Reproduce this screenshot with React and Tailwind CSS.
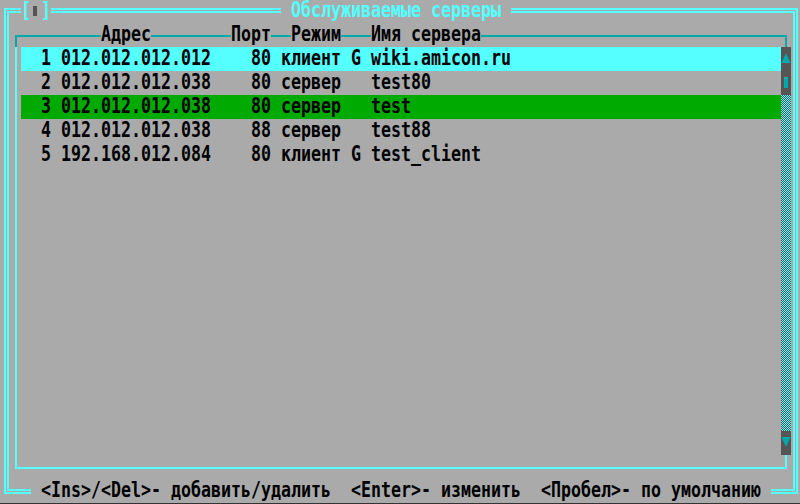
import React from "react";

const BASE =
  "block whitespace-pre origin-left scale-x-[0.755] font-['DejaVu_Sans_Mono',monospace] font-bold text-[22px] ";
const TXT = BASE + "leading-[22px]";
const TXT0 = BASE + "leading-[20px]";

function T({ w, children, className = "" }) {
  return (
    <div className={"shrink-0 h-[24px] " + w + " " + className}>
      <span className={TXT}>{children}</span>
    </div>
  );
}

function T0({ w, children, className = "" }) {
  return (
    <div className={"shrink-0 h-[23px] " + w + " " + className}>
      <span className={TXT0}>{children}</span>
    </div>
  );
}

function DH({ w }) {
  // double horizontal line segment (outer frame)
  return <div className={"shrink-0 h-[5px] border-y-2 border-[#55ffff] " + w} />;
}

const rows = [
  { bg: "bg-[#55ffff]", t: "  1 012.012.012.012    80 клиент G wiki.amicon.ru" },
  { bg: "", t: "  2 012.012.012.038    80 сервер   test80" },
  { bg: "bg-[#00aa00]", t: "  3 012.012.012.038    80 сервер   test" },
  { bg: "", t: "  4 012.012.012.038    88 сервер   test88" },
  { bg: "", t: "  5 192.168.012.084    80 клиент G test_client" },
];

export default function App() {
  return (
    <div className="w-[800px] h-[504px] bg-[#aaaaaa] flex flex-col pl-px overflow-hidden text-black">
      {/* Row 0: top frame with close box and title */}
      <div className="flex h-[23px] shrink-0">
        <div className="w-[10px] shrink-0 flex flex-col pl-[3px] pt-[8px]">
          <div className="flex-1 border-l-2 border-t-2 border-[#55ffff] flex flex-col pl-px pt-px">
            <div className="flex-1 border-l-2 border-t-2 border-[#55ffff]" />
          </div>
        </div>
        <div className="w-[10px] shrink-0 pt-[8px]">
          <DH w="w-[10px]" />
        </div>
        <T0 w="w-[10px]" className="text-[#55ffff]">[</T0>
        <div className="w-[10px] shrink-0 pl-[2px] pt-[6px]">
          <div className="w-[4px] h-[10px] bg-[#555555]" />
        </div>
        <T0 w="w-[10px]" className="text-[#55ffff]">]</T0>
        <div className="w-[230px] shrink-0 pt-[8px]">
          <DH w="w-[230px]" />
        </div>
        <T0 w="w-[230px]" className="text-[#55ffff]">{" Обслуживаемые серверы "}</T0>
        <div className="w-[280px] shrink-0 pt-[8px]">
          <DH w="w-[280px]" />
        </div>
        <div className="w-[10px] shrink-0 flex flex-col pt-[8px]">
          <div className="w-[7px] flex-1 border-t-2 border-r-2 border-[#55ffff] flex flex-col pt-px pr-px">
            <div className="flex-1 border-t-2 border-r-2 border-[#55ffff]" />
          </div>
        </div>
      </div>

      {/* Rows 1..19 */}
      <div className="flex h-[456px] shrink-0">
        <div className="w-[10px] shrink-0 pl-[3px]">
          <div className="w-[5px] h-full border-x-2 border-[#55ffff]" />
        </div>

        <div className="w-[780px] shrink-0 flex flex-col">
          {/* header row */}
          <div className="flex h-[24px] shrink-0">
            <div className="w-[10px] shrink-0 flex flex-col pl-[4px] pt-[12px]">
              <div className="flex-1 border-l-2 border-t-2 border-[#00aaaa]" />
            </div>
            <div className="w-[80px] shrink-0 mt-[12px] h-[2px] bg-[#00aaaa]" />
            <T w="w-[50px]">Адрес</T>
            <div className="w-[80px] shrink-0 mt-[12px] h-[2px] bg-[#00aaaa]" />
            <T w="w-[40px]">Порт</T>
            <div className="w-[20px] shrink-0 mt-[12px] h-[2px] bg-[#00aaaa]" />
            <T w="w-[50px]">Режим</T>
            <div className="w-[30px] shrink-0 mt-[12px] h-[2px] bg-[#00aaaa]" />
            <T w="w-[110px]">Имя сервера</T>
            <div className="w-[300px] shrink-0 mt-[12px] h-[2px] bg-[#00aaaa]" />
            <div className="w-[10px] shrink-0 flex flex-col pt-[12px]">
              <div className="w-[6px] flex-1 border-t-2 border-r-2 border-[#00aaaa]" />
            </div>
          </div>

          {/* list body */}
          <div className="flex h-[408px] shrink-0">
            <div className="w-[10px] shrink-0 pl-[4px]">
              <div className="w-[2px] h-full bg-[#55ffff]" />
            </div>
            <div className="w-[760px] shrink-0 flex flex-col">
              {rows.map((r, i) => (
                <div key={i} className={"h-[24px] shrink-0 " + r.bg}>
                  <span className={TXT}>{r.t}</span>
                </div>
              ))}
            </div>
            <div className="w-[10px] shrink-0 flex flex-col">
              <div className="h-[24px] shrink-0 bg-[#555555]">
                <svg width="10" height="24" viewBox="0 0 10 24" className="block">
                  <polygon points="5,6 9.5,16 0.5,16" fill="#00aaaa" />
                </svg>
              </div>
              <div className="h-[24px] shrink-0 bg-[#555555] pl-[3px] pt-[6px]">
                <div className="w-[4px] h-[11px] bg-[#00aaaa]" />
              </div>
              <div className="h-[336px] shrink-0">
                <svg width="10" height="336" viewBox="0 0 10 336" className="block" shapeRendering="crispEdges">
                  <defs>
                    <pattern id="chk" width="2" height="2" patternUnits="userSpaceOnUse">
                      <rect width="2" height="2" fill="#555555" />
                      <rect width="1" height="1" fill="#55ffff" />
                      <rect x="1" y="1" width="1" height="1" fill="#55ffff" />
                    </pattern>
                  </defs>
                  <rect width="10" height="336" fill="url(#chk)" />
                </svg>
              </div>
              <div className="h-[24px] shrink-0 bg-[#555555]">
                <svg width="10" height="24" viewBox="0 0 10 24" className="block">
                  <polygon points="0.5,6 9.5,6 5,16" fill="#00aaaa" />
                </svg>
              </div>
            </div>
          </div>

          {/* bottom line of list frame */}
          <div className="flex h-[24px] shrink-0">
            <div className="w-[10px] shrink-0 flex flex-col pl-[4px] pb-[10px]">
              <div className="flex-1 border-l-2 border-b-2 border-[#55ffff]" />
            </div>
            <div className="w-[760px] shrink-0 mt-[12px] h-[2px] bg-[#55ffff]" />
            <div className="w-[10px] shrink-0 flex flex-col pb-[10px]">
              <div className="w-[6px] flex-1 border-r-2 border-b-2 border-[#55ffff]" />
            </div>
          </div>
        </div>

        <div className="w-[10px] shrink-0 pl-[2px]">
          <div className="w-[5px] h-full border-x-2 border-[#55ffff]" />
        </div>
      </div>

      {/* Row 20: bottom frame with status line */}
      <div className="flex h-[24px] shrink-0">
        <div className="w-[10px] shrink-0 flex flex-col pl-[3px] pb-[9px]">
          <div className="flex-1 border-l-2 border-b-2 border-[#55ffff] flex flex-col pl-px pb-px">
            <div className="flex-1 border-l-2 border-b-2 border-[#55ffff]" />
          </div>
        </div>
        <div className="w-[20px] shrink-0 pt-[10px]">
          <DH w="w-[20px]" />
        </div>
        <T w="w-[740px]">{" <Ins>/<Del>- добавить/удалить  <Enter>- изменить  <Пробел>- по умолчанию "}</T>
        <div className="w-[20px] shrink-0 pt-[10px]">
          <DH w="w-[20px]" />
        </div>
        <div className="w-[10px] shrink-0 flex flex-col pb-[9px]">
          <div className="w-[7px] flex-1 border-r-2 border-b-2 border-[#55ffff] flex flex-col pr-px pb-px">
            <div className="flex-1 border-r-2 border-b-2 border-[#55ffff]" />
          </div>
        </div>
      </div>
      <div className="h-px shrink-0 -ml-px bg-[#333333]" />
    </div>
  );
}
